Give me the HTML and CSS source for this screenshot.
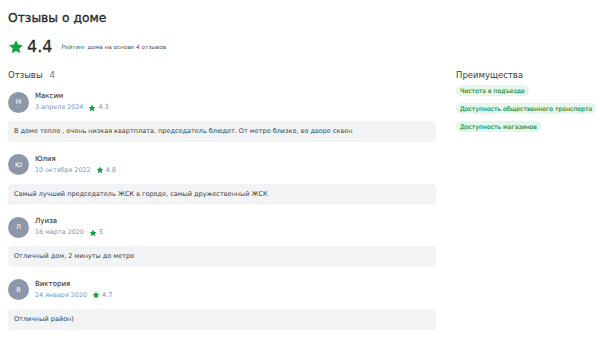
FILE: index.html
```html
<!DOCTYPE html>
<html lang="ru">
<head>
<meta charset="utf-8">
<link rel="stylesheet" href="styles.css">
</head>
<body>
<div class="page">
  <h1 class="title">Отзывы о доме</h1>
  <div class="rating">
    <svg class="big-star" viewBox="0 0 24 24"><path d="M12 1.8l3.1 6.6 7.2.9-5.3 5 1.4 7.1L12 17.9l-6.4 3.5L7 14.3l-5.3-5 7.2-.9z"/></svg>
    <span class="rating-value">4.4</span>
    <span class="rating-note">Рейтинг дома на основе 4 отзывов</span>
  </div>
  <div class="columns">
    <div class="reviews">
      <div class="reviews-head">Отзывы <span class="count">4</span></div>
      <div class="review">
        <div class="author">
          <div class="avatar">М</div>
          <div class="meta">
            <div class="name">Максим</div>
            <div class="sub"><span class="date">3 апреля 2024</span><svg class="star" viewBox="0 0 24 24"><path d="M12 1.8l3.1 6.6 7.2.9-5.3 5 1.4 7.1L12 17.9l-6.4 3.5L7 14.3l-5.3-5 7.2-.9z"/></svg><span class="score">4.3</span></div>
          </div>
        </div>
        <div class="text">В доме тепло , очень низкая квартплата, председатель блюдет. От метро близко, во дворе сквен</div>
      </div>
      <div class="review">
        <div class="author">
          <div class="avatar">Ю</div>
          <div class="meta">
            <div class="name">Юлия</div>
            <div class="sub"><span class="date">10 октября 2022</span><svg class="star" viewBox="0 0 24 24"><path d="M12 1.8l3.1 6.6 7.2.9-5.3 5 1.4 7.1L12 17.9l-6.4 3.5L7 14.3l-5.3-5 7.2-.9z"/></svg><span class="score">4.8</span></div>
          </div>
        </div>
        <div class="text">Самый лучший председатель ЖСК в городе, самый дружественный ЖСК</div>
      </div>
      <div class="review">
        <div class="author">
          <div class="avatar">Л</div>
          <div class="meta">
            <div class="name">Луиза</div>
            <div class="sub"><span class="date">16 марта 2020</span><svg class="star" viewBox="0 0 24 24"><path d="M12 1.8l3.1 6.6 7.2.9-5.3 5 1.4 7.1L12 17.9l-6.4 3.5L7 14.3l-5.3-5 7.2-.9z"/></svg><span class="score">5</span></div>
          </div>
        </div>
        <div class="text">Отличный дом, 2 минуты до метро</div>
      </div>
      <div class="review">
        <div class="author">
          <div class="avatar">В</div>
          <div class="meta">
            <div class="name">Виктория</div>
            <div class="sub"><span class="date">24 января 2020</span><svg class="star" viewBox="0 0 24 24"><path d="M12 1.8l3.1 6.6 7.2.9-5.3 5 1.4 7.1L12 17.9l-6.4 3.5L7 14.3l-5.3-5 7.2-.9z"/></svg><span class="score">4.7</span></div>
          </div>
        </div>
        <div class="text">Отличный район)</div>
      </div>
    </div>
    <div class="perks">
      <div class="perks-head">Преимущества</div>
      <div class="chips">
        <span class="chip">Чистота в подъезде</span>
        <span class="chip">Доступность общественного транспорта</span>
        <span class="chip">Доступность магазинов</span>
      </div>
    </div>
  </div>
</div>
</body>
</html>
```

FILE: styles.css
```css
* { box-sizing: border-box; }
html, body { margin: 0; background: #fff; }
body { font-family: "DejaVu Sans", Verdana, sans-serif; color: #2b2d33; }
.page { padding: 8px 8px 0 8px; }
.title { margin: 0; font-size: 12.3px; line-height: 20px; font-weight: 400; -webkit-text-stroke: 0.35px #2b2d33; color: #2b2d33; }
.rating { display: flex; align-items: center; margin-top: 10px; height: 18px; }
.big-star { width: 16px; height: 16px; fill: #14a33d; }
.rating-value { font-size: 16px; line-height: 18px; margin-left: 3px; -webkit-text-stroke: 0.3px #2b2d33; color: #2b2d33; }
.rating-note { font-size: 5.7px; margin-left: 9px; color: #4a4d55; }
.columns { display: flex; gap: 20px; margin-top: 13px; }
.reviews { width: 428px; flex: none; }
.reviews-head { font-size: 8.5px; line-height: 12px; color: #3a3d44; }
.count { color: #6f7d95; margin-left: 4px; font-size: 9px; }
.review { margin-top: 10px; }
.review + .review { margin-top: 11.5px; }
.author { display: flex; align-items: center; gap: 6px; }
.avatar { width: 21px; height: 21px; border-radius: 50%; background: #8d97aa; color: #fff; font-size: 6.5px; display: flex; align-items: center; justify-content: center; }
.name { font-size: 7px; line-height: 11px; color: #33363c; -webkit-text-stroke: 0.1px #33363c; }
.sub { display: flex; align-items: center; font-size: 6.4px; line-height: 11px; color: #7f93b5; }
.star { width: 8px; height: 8px; fill: #14a33d; margin: 0 2px 0 5px; }
.score { color: #7f93b5; }
.text { margin-top: 8px; background: #f2f3f5; border-radius: 4px; font-size: 6.5px; line-height: 21px; height: 21px; padding: 0 6px; color: #3a3d44; }
.perks { flex: 1; min-width: 0; }
.perks-head { font-size: 8.5px; line-height: 12px; color: #3a3d44; }
.chips { display: flex; flex-direction: column; align-items: flex-start; gap: 7px; margin-top: 4px; }
.chip { background: #e5f6ea; color: #1f8a45; font-size: 6.1px; line-height: 11px; padding: 0 4px; border-radius: 6px; white-space: nowrap; -webkit-text-stroke: 0.15px #1f8a45; }
```
